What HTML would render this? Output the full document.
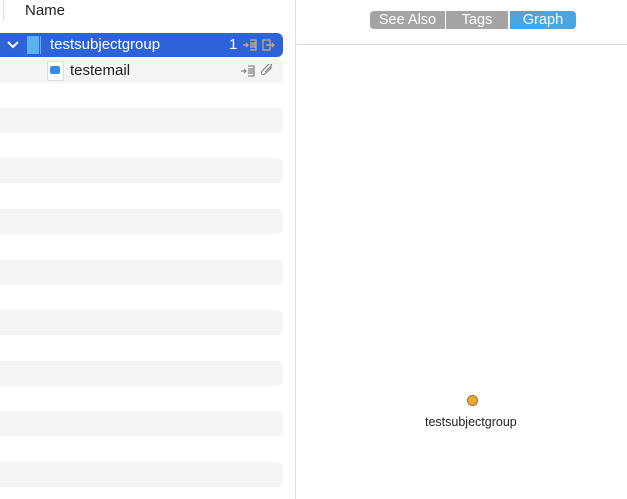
<!DOCTYPE html>
<html><head><style>
body{margin:0;width:627px;height:499px;background:#fff;position:relative;overflow:hidden;font-family:"Liberation Sans",Arial,sans-serif}
.a{position:absolute}
.stripe{position:absolute;left:0;width:283px;height:25px;background:#f3f4f4;border-radius:0 6px 6px 0}
.btn{position:absolute;top:11px;height:18px;color:#fff;font-size:14.5px;text-align:center;line-height:18px;background:#a4a4a4}
</style></head><body>
<div class="a" style="left:3px;top:0;width:1px;height:20px;background:#ddd"></div>
<div class="a" style="left:25px;top:2px;font-size:15px;color:#222">Name</div>
<div class="a" style="left:295px;top:0;width:1px;height:499px;background:#e0e0e0"></div>
<div class="a" style="left:0;top:33px;width:283px;height:24px;background:#2d63d6;border-radius:0 6px 6px 0"></div>
<svg class="a" style="left:6px;top:39px" width="14" height="12"><path d="M2 3l5 5 5-5" stroke="#fff" stroke-width="2" fill="none"/></svg>
<div class="a" style="left:27px;top:36px;width:12px;height:18px;background:#5bb2ec"></div>
<div class="a" style="left:40px;top:36px;width:1px;height:18px;background:#5bb2ec"></div>
<div class="a" style="left:50px;top:36px;font-size:15px;color:#fff">testsubjectgroup</div>
<div class="a" style="left:229px;top:36px;font-size:15px;color:#fff">1</div>
<svg class="a" style="left:242px;top:38px" width="34" height="14" fill="none" stroke="#d4b070" stroke-width="1.2">
<path d="M1 7h5M4 5l2 2-2 2M8 2h6v10H8M8 5h6M8 7h6M8 9h6"/>
<path d="M21 2h7v10h-7zM24 7h8M30 5l2 2-2 2"/>
</svg>
<div class="a" style="left:0;top:59px;width:283px;height:24px;background:#f3f4f4;border-radius:0 6px 6px 0"></div>
<div class="a" style="left:47px;top:61px;width:15px;height:18px;background:#fff;border:1px solid #ddd;border-radius:2px"></div>
<div class="a" style="left:50px;top:66px;width:10px;height:8px;background:#3a8de6;border-radius:2px"></div>
<div class="a" style="left:70px;top:62px;font-size:15px;color:#222">testemail</div>
<svg class="a" style="left:240px;top:64px" width="36" height="14" fill="none" stroke="#888" stroke-width="1.2">
<path d="M1 7h5M4 5l2 2-2 2M8 2h6v10H8M8 5h6M8 7h6M8 9h6"/>
<path d="M32 3l-7 7a2 2 0 0 1-3-3l7-7a1.4 1.4 0 0 1 2 2l-6 6"/>
</svg>
<div class="stripe" style="top:108px"></div>
<div class="stripe" style="top:158px"></div>
<div class="stripe" style="top:209px"></div>
<div class="stripe" style="top:260px"></div>
<div class="stripe" style="top:310px"></div>
<div class="stripe" style="top:361px"></div>
<div class="stripe" style="top:411px"></div>
<div class="stripe" style="top:462px"></div>
<div class="btn" style="left:370px;width:75px;border-radius:4px 0 0 4px">See Also</div>
<div class="btn" style="left:446px;width:62px">Tags</div>
<div class="btn" style="left:510px;width:66px;background:#4aa5e0;border-radius:0 4px 4px 0">Graph</div>
<div class="a" style="left:297px;top:44px;width:330px;height:1px;background:#ddd"></div>
<div class="a" style="left:467px;top:395px;width:9px;height:9px;border-radius:50%;background:#f0a838;border:1px solid #9a7030"></div>
<div class="a" style="left:425px;top:415px;font-size:12.5px;color:#222">testsubjectgroup</div>
</body></html>
